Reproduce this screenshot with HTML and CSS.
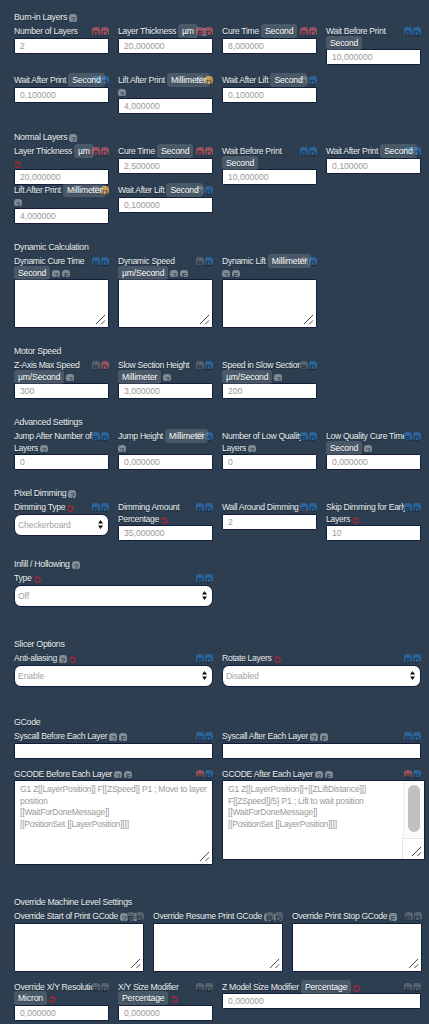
FILE: index.html
```html
<!DOCTYPE html>
<html lang="en">
  <head>
    <meta charset="UTF-8" />
    <meta name="viewport" content="width=device-width, initial-scale=1.0" />
    <title>Resin Profile Settings</title>
    <link rel="stylesheet" href="styles.css">
  </head>
  <body>
    <svg class="sprite" width="0" height="0">
      <symbol id="undo" viewBox="0 0 8 8">
        <path d="M2.2 1.8A3 3 0 1 1 1.1 4.6" fill="none" stroke="#d0202e" stroke-width="1.2" />
        <path d="M0.4 1.2L3.4 0.6L2.8 3.6Z" fill="#d0202e" />
      </symbol>
      <symbol id="grip" viewBox="0 0 12 12">
        <path d="M1 11L11 1M7 11L11 7" fill="none" stroke="#222" stroke-width="0.9" />
      </symbol>
    </svg>

    <section class="group">
      <h2 class="heading">Burn-in Layers <span class="chip gray">?</span></h2>
      <div class="row">
        <div class="field">
          <div class="rd"><span class="chip red">R</span><span class="chip red">D</span></div>
          <div class="lbl">Number of Layers</div>
          <input class="box" value="2" />
        </div>
        <div class="field">
          <div class="rd"><span class="chip red">R</span><span class="chip red">D</span></div>
          <div class="lbl">Layer Thickness <span class="unit">µm</span> <span class="chip gray">?</span></div>
          <input class="box" value="20,000000" />
        </div>
        <div class="field">
          <div class="rd"><span class="chip red">R</span><span class="chip red">D</span></div>
          <div class="lbl">Cure Time <span class="unit">Second</span></div>
          <input class="box" value="8,000000" />
        </div>
        <div class="field">
          <div class="rd"><span class="chip blue">R</span><span class="chip blue">D</span></div>
          <div class="lbl">Wait Before Print<br /><span class="unit">Second</span></div>
          <input class="box" value="10,000000" />
        </div>
      </div>
      <div class="row">
        <div class="field">
          <div class="rd"><span class="chip blue">R</span><span class="chip blue">D</span></div>
          <div class="lbl">Wait After Print <span class="unit">Second</span></div>
          <input class="box" value="0,100000" />
        </div>
        <div class="field">
          <div class="rd"><span class="chip gray">R</span><span class="chip orange">D</span></div>
          <div class="lbl">Lift After Print <span class="unit">Millimeter</span><br /><span class="chip gray first">?</span></div>
          <input class="box" value="4,000000" />
        </div>
        <div class="field">
          <div class="rd"><span class="chip gray">R</span><span class="chip blue">D</span></div>
          <div class="lbl">Wait After Lift <span class="unit">Second</span></div>
          <input class="box" value="0,100000" />
        </div>
      </div>
    </section>

    <section class="group">
      <h2 class="heading">Normal Layers <span class="chip gray">?</span></h2>
      <div class="row">
        <div class="field">
          <div class="rd"><span class="chip red">R</span><span class="chip red">D</span></div>
          <div class="lbl">Layer Thickness <span class="unit">µm</span><br /><svg class="undo"><use href="#undo" /></svg></div>
          <input class="box" value="20,000000" />
        </div>
        <div class="field">
          <div class="rd"><span class="chip red">R</span><span class="chip red">D</span></div>
          <div class="lbl">Cure Time <span class="unit">Second</span></div>
          <input class="box" value="2,500000" />
        </div>
        <div class="field">
          <div class="rd"><span class="chip blue">R</span><span class="chip blue">D</span></div>
          <div class="lbl">Wait Before Print<br /><span class="unit">Second</span></div>
          <input class="box" value="10,000000" />
        </div>
        <div class="field">
          <div class="rd"><span class="chip blue">R</span><span class="chip blue">D</span></div>
          <div class="lbl">Wait After Print <span class="unit">Second</span></div>
          <input class="box" value="0,100000" />
        </div>
      </div>
      <div class="row tight">
        <div class="field">
          <div class="rd"><span class="chip gray">R</span><span class="chip orange">D</span></div>
          <div class="lbl">Lift After Print <span class="unit">Millimeter</span><br /><span class="chip gray first">?</span></div>
          <input class="box" value="4,000000" />
        </div>
        <div class="field">
          <div class="rd"><span class="chip gray">R</span><span class="chip blue">D</span></div>
          <div class="lbl">Wait After Lift <span class="unit">Second</span></div>
          <input class="box" value="0,100000" />
        </div>
      </div>
    </section>

    <section class="group">
      <h2 class="heading">Dynamic Calculation</h2>
      <div class="row">
        <div class="field">
          <div class="rd"><span class="chip blue">R</span><span class="chip blue">D</span></div>
          <div class="lbl">Dynamic Cure Time<br /><span class="unit">Second</span> <span class="chip gray">?</span> <span class="chip gray">F</span></div>
          <div class="area"><textarea class="box text"></textarea><svg class="grip"><use href="#grip" /></svg></div>
        </div>
        <div class="field">
          <div class="rd"><span class="chip gray">R</span><span class="chip blue">D</span></div>
          <div class="lbl">Dynamic Speed<br /><span class="unit">µm/Second</span> <span class="chip gray">?</span> <span class="chip gray">F</span></div>
          <div class="area"><textarea class="box text"></textarea><svg class="grip"><use href="#grip" /></svg></div>
        </div>
        <div class="field">
          <div class="rd"><span class="chip gray">R</span><span class="chip blue">D</span></div>
          <div class="lbl">Dynamic Lift <span class="unit">Millimeter</span><br /><span class="chip gray first">?</span> <span class="chip gray">F</span></div>
          <div class="area"><textarea class="box text"></textarea><svg class="grip"><use href="#grip" /></svg></div>
        </div>
      </div>
    </section>

    <section class="group">
      <h2 class="heading">Motor Speed</h2>
      <div class="row">
        <div class="field">
          <div class="rd"><span class="chip gray">R</span><span class="chip red">D</span></div>
          <div class="lbl">Z-Axis Max Speed<br /><span class="unit">µm/Second</span> <span class="chip gray">?</span></div>
          <input class="box" value="300" />
        </div>
        <div class="field">
          <div class="rd"><span class="chip gray">R</span><span class="chip blue">D</span></div>
          <div class="lbl">Slow Section Height<br /><span class="unit">Millimeter</span> <span class="chip gray">?</span></div>
          <input class="box" value="3,000000" />
        </div>
        <div class="field">
          <div class="rd"><span class="chip gray">R</span><span class="chip blue">D</span></div>
          <div class="lbl">Speed in Slow Section<br /><span class="unit">µm/Second</span> <span class="chip gray">?</span></div>
          <input class="box" value="200" />
        </div>
      </div>
    </section>

    <section class="group">
      <h2 class="heading">Advanced Settings</h2>
      <div class="row">
        <div class="field">
          <div class="rd"><span class="chip blue">R</span><span class="chip blue">D</span></div>
          <div class="lbl">Jump After Number of<br />Layers <span class="chip gray">?</span></div>
          <input class="box" value="0" />
        </div>
        <div class="field">
          <div class="rd"><span class="chip gray">R</span><span class="chip blue">D</span></div>
          <div class="lbl">Jump Height <span class="unit">Millimeter</span><br /><span class="chip gray first">?</span></div>
          <input class="box" value="0,000000" />
        </div>
        <div class="field">
          <div class="rd"><span class="chip blue">R</span><span class="chip blue">D</span></div>
          <div class="lbl">Number of Low Quality<br />Layers <span class="chip gray">?</span></div>
          <input class="box" value="0" />
        </div>
        <div class="field">
          <div class="rd"><span class="chip blue">R</span><span class="chip blue">D</span></div>
          <div class="lbl">Low Quality Cure Time<br /><span class="unit">Second</span> <span class="chip gray">?</span></div>
          <input class="box" value="0,000000" />
        </div>
      </div>
    </section>

    <section class="group">
      <h2 class="heading">Pixel Dimming <span class="chip gray">?</span></h2>
      <div class="row">
        <div class="field">
          <div class="rd"><span class="chip blue">R</span><span class="chip blue">D</span></div>
          <div class="lbl">Dimming Type <svg class="undo"><use href="#undo" /></svg></div>
          <select class="pick"><option>Checkerboard</option></select>
        </div>
        <div class="field">
          <div class="rd"><span class="chip blue">R</span><span class="chip blue">D</span></div>
          <div class="lbl">Dimming Amount<br />Percentage <svg class="undo"><use href="#undo" /></svg></div>
          <input class="box" value="35,000000" />
        </div>
        <div class="field">
          <div class="rd"><span class="chip blue">R</span><span class="chip blue">D</span></div>
          <div class="lbl">Wall Around Dimming <svg class="undo"><use href="#undo" /></svg></div>
          <input class="box" value="2" />
        </div>
        <div class="field">
          <div class="rd"><span class="chip blue">R</span><span class="chip blue">D</span></div>
          <div class="lbl">Skip Dimming for Early<br />Layers <svg class="undo"><use href="#undo" /></svg></div>
          <input class="box" value="10" />
        </div>
      </div>
    </section>

    <section class="group">
      <h2 class="heading">Infill / Hollowing <span class="chip gray">?</span></h2>
      <div class="row">
        <div class="field wide">
          <div class="rd"><span class="chip blue">R</span><span class="chip blue">D</span></div>
          <div class="lbl">Type <svg class="undo"><use href="#undo" /></svg></div>
          <select class="pick"><option>Off</option></select>
        </div>
      </div>
    </section>

    <section class="group farther">
      <h2 class="heading">Slicer Options</h2>
      <div class="row">
        <div class="field wide">
          <div class="rd"><span class="chip blue">R</span><span class="chip blue">D</span></div>
          <div class="lbl">Anti-aliasing <span class="chip gray">?</span> <svg class="undo"><use href="#undo" /></svg></div>
          <select class="pick"><option>Enable</option></select>
        </div>
        <div class="field wide">
          <div class="rd"><span class="chip blue">R</span><span class="chip blue">D</span></div>
          <div class="lbl">Rotate Layers <svg class="undo"><use href="#undo" /></svg></div>
          <select class="pick"><option>Disabled</option></select>
        </div>
      </div>
    </section>

    <section class="group far">
      <h2 class="heading">GCode</h2>
      <div class="row">
        <div class="field wide">
          <div class="rd"><span class="chip blue">R</span><span class="chip blue">D</span></div>
          <div class="lbl">Syscall Before Each Layer <span class="chip gray">?</span> <span class="chip gray">F</span></div>
          <input class="box" value="" />
        </div>
        <div class="field wide">
          <div class="rd"><span class="chip blue">R</span><span class="chip blue">D</span></div>
          <div class="lbl">Syscall After Each Layer <span class="chip gray">?</span> <span class="chip gray">F</span></div>
          <input class="box" value="" />
        </div>
      </div>
      <div class="row">
        <div class="field wide">
          <div class="rd"><span class="chip red">R</span><span class="chip blue">D</span></div>
          <div class="lbl">GCODE Before Each Layer <span class="chip gray">?</span> <span class="chip gray">F</span></div>
          <div class="area"><textarea class="box text code-left">G1 Z[[LayerPosition]] F[[ZSpeed]] P1 ; Move to layer position
[[WaitForDoneMessage]]
[[PositionSet [[LayerPosition]]]]</textarea><svg class="grip"><use href="#grip" /></svg></div>
        </div>
        <div class="field wide">
          <div class="rd"><span class="chip red">R</span><span class="chip blue">D</span></div>
          <div class="lbl">GCODE After Each Layer <span class="chip gray">?</span> <span class="chip gray">F</span></div>
          <div class="area resized"><textarea class="box text code-right">G1 Z[[LayerPosition]]+[[ZLiftDistance]]} F[[ZSpeed]]/5} P1 ; Lift to wait position
[[WaitForDoneMessage]]
[[PositionSet [[LayerPosition]]]]</textarea>
            <div class="track"><div class="thumb"></div></div>
            <div class="corner"></div>
            <svg class="grip"><use href="#grip" /></svg>
          </div>
        </div>
      </div>
    </section>

    <section class="group farther">
      <h2 class="heading">Override Machine Level Settings</h2>
      <div class="row thirds">
        <div class="field">
          <div class="rd"><span class="chip gray">R</span><span class="chip gray">D</span></div>
          <div class="lbl">Override Start of Print GCode <span class="chip gray">?</span> <span class="chip gray">F</span></div>
          <div class="area"><textarea class="box text"></textarea><svg class="grip"><use href="#grip" /></svg></div>
        </div>
        <div class="field">
          <div class="rd"><span class="chip gray">R</span><span class="chip gray">D</span></div>
          <div class="lbl">Override Resume Print GCode <span class="chip gray">?</span> <span class="chip gray">F</span></div>
          <div class="area"><textarea class="box text"></textarea><svg class="grip"><use href="#grip" /></svg></div>
        </div>
        <div class="field">
          <div class="rd"><span class="chip gray">R</span><span class="chip gray">D</span></div>
          <div class="lbl">Override Print Stop GCode <span class="chip gray">F</span></div>
          <div class="area"><textarea class="box text"></textarea><svg class="grip"><use href="#grip" /></svg></div>
        </div>
      </div>
      <div class="row">
        <div class="field">
          <div class="rd"><span class="chip gray">R</span><span class="chip gray">D</span></div>
          <div class="lbl">Override X/Y Resolution<br /><span class="unit">Micron</span> <svg class="undo"><use href="#undo" /></svg></div>
          <input class="box" value="0,000000" />
        </div>
        <div class="field">
          <div class="rd"><span class="chip gray">R</span><span class="chip gray">D</span></div>
          <div class="lbl">X/Y Size Modifier<br /><span class="unit">Percentage</span> <svg class="undo"><use href="#undo" /></svg></div>
          <input class="box" value="0,000000" />
        </div>
        <div class="field wide">
          <div class="rd"><span class="chip gray">R</span><span class="chip gray">D</span></div>
          <div class="lbl">Z Model Size Modifier <span class="unit">Percentage</span> <svg class="undo"><use href="#undo" /></svg></div>
          <input class="box" value="0,000000" />
        </div>
      </div>
    </section>
  </body>
</html>
```

FILE: styles.css
```css
* {
  padding: 0;
  margin: 0;
  box-sizing: border-box;
}

body {
  padding: 12px 8px 0 14px;
  background-color: #2c3e50;
  font-family: "Liberation Sans", Arial, sans-serif;
  font-size: 8.6px;
  line-height: 11.5px;
  letter-spacing: -0.3px;
  color: #e9edf0;
  text-shadow: 0 1px 1px rgba(0, 0, 0, 0.3);
}

.sprite {
  position: absolute;
}

.group {
  margin-bottom: 18px;
}

.group.far {
  margin-top: 30px;
}

.group.farther {
  margin-top: 32px;
}

.heading {
  margin-bottom: 2.5px;
  font-size: 8.8px;
  font-weight: 400;
}

.row {
  display: grid;
  grid-template-columns: repeat(4, 95px);
  column-gap: 9px;
  align-items: start;
  margin-bottom: 10px;
}

.row:last-child {
  margin-bottom: 0;
}

.row:has(+ .row.tight) {
  margin-bottom: 0;
}

.row.thirds {
  grid-template-columns: repeat(3, 129.5px);
  column-gap: 9.5px;
}

.field {
  position: relative;
}

.field.wide {
  grid-column: span 2;
}

.rd {
  position: absolute;
  top: 1px;
  right: 0;
  display: flex;
  gap: 1px;
}

.chip {
  display: inline-block;
  width: 8px;
  height: 7.5px;
  border-radius: 3px 3px 2px 2px;
  font-size: 8px;
  line-height: 11px;
  letter-spacing: 0;
  text-align: center;
  text-shadow: none;
  vertical-align: -2px;
  color: #16202e;
}

.chip.first {
  margin-top: 1px;
}

.rd .chip {
  line-height: 13px;
}

.chip.gray {
  background-color: #7f8b97;
}

.rd .chip.gray {
  background-color: #55636f;
}

.chip.blue {
  background-color: #2c6296;
}

.chip.red {
  background-color: #95505e;
}

.chip.orange {
  background-color: #c09048;
}

/* the unit pill sits over the R/D chips, as in the app */
.unit {
  position: relative;
  z-index: 1;
  padding: 2px 4px;
  border-radius: 3px;
  background-color: rgba(255, 255, 255, 0.14);
  letter-spacing: -0.15px;
  color: #fff;
  white-space: nowrap;
}

.undo {
  width: 7px;
  height: 7px;
  vertical-align: -2px;
}

.box {
  display: block;
  width: 100%;
  height: 16px;
  padding: 0 5px;
  border: 1px solid #141c3c;
  border-radius: 1px;
  background-color: #fff;
  font-family: inherit;
  font-size: 8.6px;
  letter-spacing: 0;
  color: #999;
}

.box.text {
  height: 49px;
  padding: 3px 5px;
  line-height: 11.5px;
  letter-spacing: -0.25px;
  overflow: hidden;
  resize: none;
}

.box.code-left {
  height: 85px;
}

.box.code-right {
  width: 203px;
  height: 80px;
  padding-right: 24px;
}

.area {
  position: relative;
}

.grip {
  position: absolute;
  right: 3px;
  bottom: 3px;
  width: 11px;
  height: 11px;
}

.area.resized .grip {
  right: -1px;
}

.track {
  position: absolute;
  top: 1px;
  left: 181px;
  width: 21px;
  height: 57px;
  border-left: 1px solid #ececec;
  background-color: #fafafa;
}

.thumb {
  width: 12px;
  height: 47px;
  margin: 4px 0 0 4px;
  border-radius: 6px;
  background-color: #c1c1c1;
}

.corner {
  position: absolute;
  top: 58px;
  left: 180px;
  width: 22px;
  height: 21px;
  border: 1px solid #e4e4e4;
  border-width: 1px 0 0 1px;
  background-color: #fff;
}

.pick {
  display: block;
  width: 100%;
  height: 22.5px;
  padding: 0 14px 0 3px;
  border: 1px solid #141c3c;
  border-radius: 7px;
  appearance: none;
  background: #fff url("data:image/svg+xml,%3Csvg xmlns='http://www.w3.org/2000/svg' width='5' height='9'%3E%3Cpath d='M2.5 0L5 3.6H0ZM2.5 9L0 5.4H5Z' fill='%23111'/%3E%3C/svg%3E") no-repeat right 5px center;
  font-family: inherit;
  font-size: 8.6px;
  letter-spacing: -0.1px;
  color: #a2a2a2;
}
```
